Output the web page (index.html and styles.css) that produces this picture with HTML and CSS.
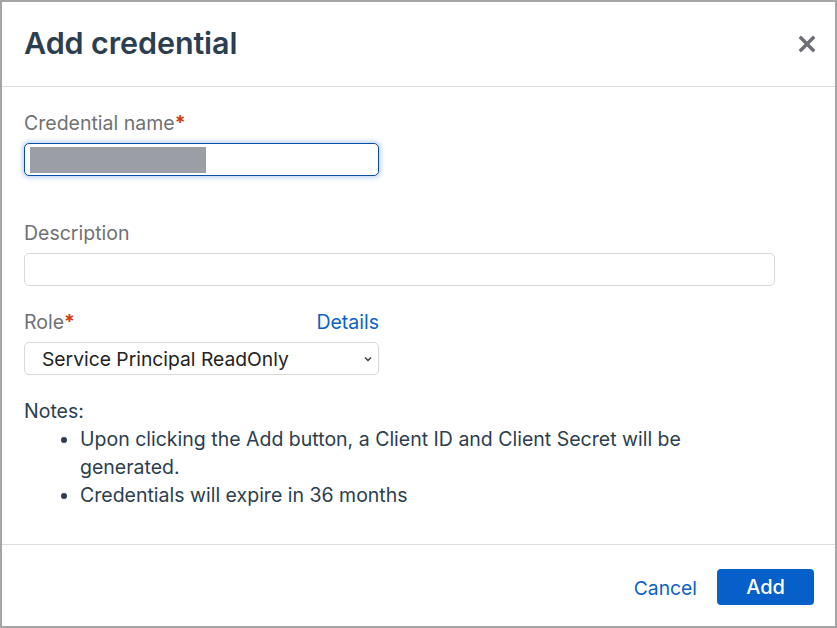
FILE: index.html
```
<!DOCTYPE html>
<html lang="en">
<head>
<meta charset="utf-8">
<title>Add credential</title>
<link rel="stylesheet" href="styles.css">
</head>
<body>
<div class="modal">
  <header class="modal-header">
    <h1 class="modal-title">Add credential</h1>
    <button class="close-btn" aria-label="Close">
      <svg width="18" height="18" viewBox="0 0 18 18"><path d="M1.8 1.8 L16.2 16.2 M16.2 1.8 L1.8 16.2" stroke="#6c6f73" stroke-width="3.4" stroke-linecap="butt"/></svg>
    </button>
  </header>
  <main class="modal-body">
    <div class="field">
      <label class="label">Credential name<span class="req">*</span></label>
      <div class="input input-focus narrow"><span class="redact"></span></div>
    </div>
    <div class="field field-desc">
      <label class="label">Description</label>
      <div class="input wide"></div>
    </div>
    <div class="field field-role">
      <div class="label-row narrow">
        <label class="label">Role<span class="req">*</span></label>
        <a class="link" href="#">Details</a>
      </div>
      <div class="input select narrow">
        <span class="select-text">Service Principal ReadOnly</span>
        <svg class="chev" width="8" height="6" viewBox="0 0 8 6"><path d="M1 1.5 L4 4.5 L7 1.5" fill="none" stroke="#333" stroke-width="1.3"/></svg>
      </div>
    </div>
    <div class="notes">
      <div class="notes-title">Notes:</div>
      <ul class="notes-list">
        <li>Upon clicking the Add button, a Client ID and Client Secret will be generated.</li>
        <li>Credentials will expire in 36 months</li>
      </ul>
    </div>
  </main>
  <footer class="modal-footer">
    <a class="btn-link" href="#">Cancel</a>
    <button class="btn-primary">Add</button>
  </footer>
</div>
</body>
</html>
```
FILE: styles.css
```
* { box-sizing: border-box; }
html, body { margin: 0; padding: 0; }
body {
  font-family: Inter, "Noto Sans", sans-serif;
  background: #fff;
  width: 837px;
  height: 628px;
  overflow: hidden;
}
.modal {
  width: 837px;
  height: 628px;
  border: 2px solid #a5a5a5;
  display: flex;
  flex-direction: column;
  background: #fff;
}
.modal-header {
  height: 85px;
  flex: none;
  border-bottom: 1px solid #dcdcdc;
  display: flex;
  align-items: center;
  justify-content: space-between;
  padding: 0 19px 0 22px;
}
.modal-title {
  margin: -3px 0 0 0;
  font-size: 30.5px;
  font-weight: 600;
  color: #2c3e4f;
  letter-spacing: -0.1px;
}
.close-btn {
  background: none;
  border: none;
  padding: 0;
  width: 18px;
  height: 18px;
  display: flex;
  cursor: pointer;
}
.modal-body {
  flex: 1;
  padding: 24px 22px 0 22px;
  border-bottom: 1px solid #dcdcdc;
}
.field { display: flex; flex-direction: column; }
.label {
  font-size: 19.5px;
  line-height: 24px;
  color: #6f7174;
}
.req { color: #d4380d; font-weight: 700; }
.input {
  margin-top: 8px;
  height: 33px;
  border: 1px solid #d9d9d9;
  border-radius: 5px;
  background: #fff;
}
.narrow { width: 355px; }
.wide { width: 751px; }
.input-focus {
  border: 1.5px solid #0a4fa6;
  box-shadow: 0 0 4px 2px rgba(80, 140, 220, 0.35);
  padding: 3px 5px;
}
.redact {
  display: block;
  width: 176px;
  height: 26px;
  background: #9b9fa5;
}
.field-desc { margin-top: 45px; }
.field-role { margin-top: 24px; }
.label-row {
  display: flex;
  justify-content: space-between;
  align-items: center;
}
.link {
  font-size: 19.5px;
  line-height: 24px;
  color: #0b62c4;
  text-decoration: none;
}
.select {
  display: flex;
  align-items: center;
  justify-content: space-between;
  padding: 0 6px 0 17px;
}
.select-text {
  font-size: 19.3px;
  color: #222;
}
.chev { margin-top: 1px; }
.notes {
  margin-top: 22px;
  width: 690px;
  font-size: 19.5px;
  line-height: 28px;
  color: #2c3e4f;
}
.notes-list {
  margin: 0;
  padding-left: 56px;
}
.modal-footer {
  flex: none;
  height: 81px;
  display: flex;
  align-items: center;
  justify-content: flex-end;
  gap: 20px;
  padding: 0 21px 0 0;
}
.btn-link {
  font-size: 19.3px;
  color: #0b62c4;
  text-decoration: none;
  padding-top: 4px;
}
.btn-primary {
  width: 97px;
  height: 36px;
  border: none;
  border-radius: 4px;
  background: #075fc9;
  color: #fff;
  font-family: Inter, "Noto Sans", sans-serif;
  font-size: 20px;
  font-weight: 500;
  margin-top: 2px;
}
```
